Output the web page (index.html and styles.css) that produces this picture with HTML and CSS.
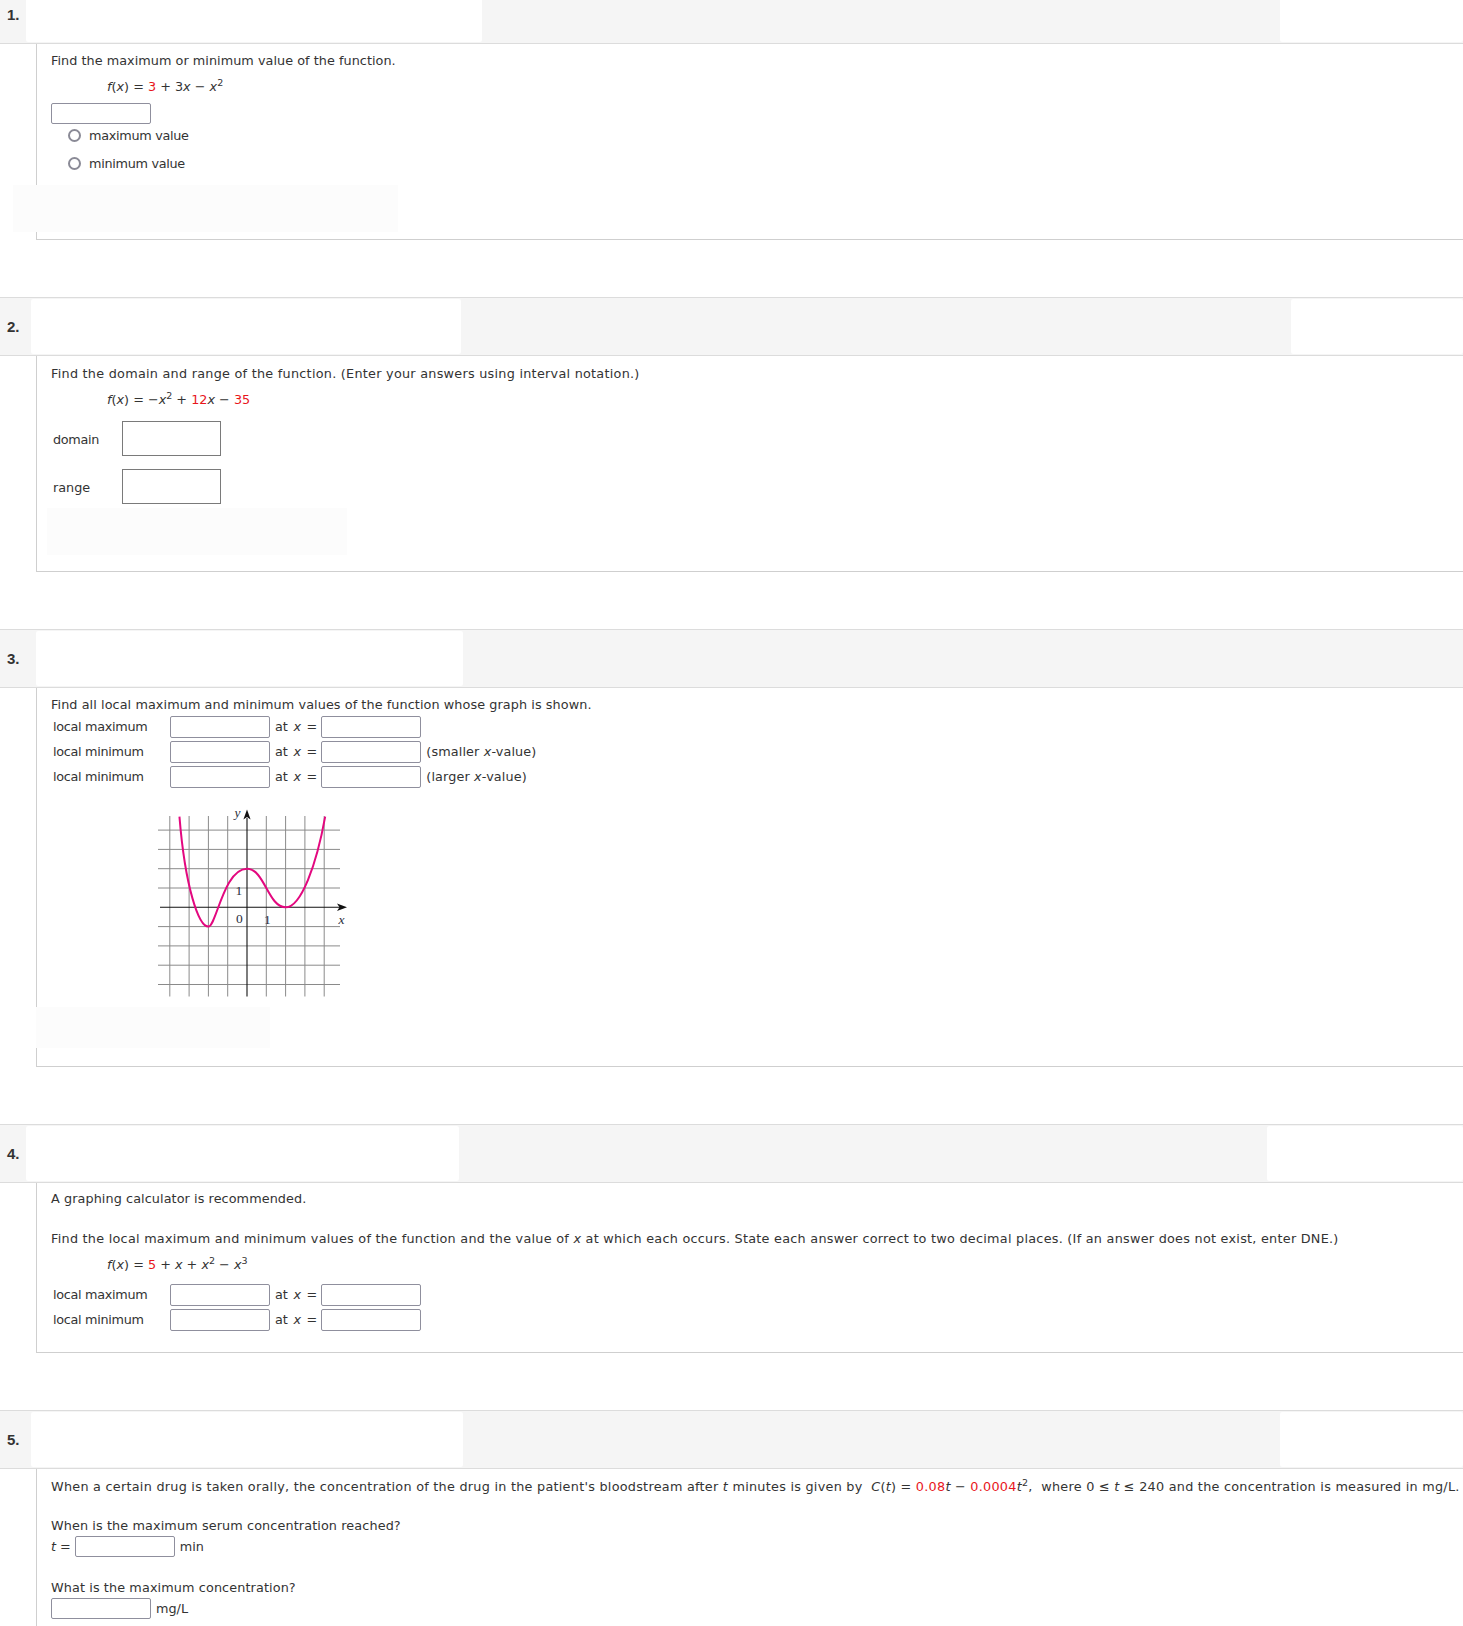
FILE: index.html
```html
<!DOCTYPE html>
<html lang="en">
<head>
<meta charset="utf-8">
<title>Assignment</title>
<link rel="stylesheet" href="styles.css">
</head>
<body>

<section class="q q1">
  <div class="qhead">
    <span class="qnum">1.</span>
    <div class="redact rl1"></div>
    <div class="redact rr rr1"></div>
  </div>
  <div class="qbody b1">
    <p class="p ls04">Find the maximum or minimum value of the function.</p>
    <p class="p fx"><i>f</i>(<i>x</i>) = <span class="r">3</span> + 3<i>x</i> − <i>x</i><sup>2</sup></p>
    <div class="ansline"><span class="inp"></span></div>
    <div class="radio first"><span class="rc"></span><span class="tight">maximum value</span></div>
    <div class="radio"><span class="rc"></span><span class="tight">minimum value</span></div>
    <div class="tools t1"></div>
  </div>
</section>

<section class="q">
  <div class="qhead">
    <span class="qnum">2.</span>
    <div class="redact rl2"></div>
    <div class="redact rr rr2"></div>
  </div>
  <div class="qbody b2">
    <p class="p wide">Find the domain and range of the function. (Enter your answers using interval notation.)</p>
    <p class="p fx"><i>f</i>(<i>x</i>) = −<i>x</i><sup>2</sup> + <span class="r">12</span><i>x</i> − <span class="r">35</span></p>
    <div class="drow d1"><span class="dlbl tight">domain</span><span class="inp big"></span></div>
    <div class="drow d2"><span class="dlbl">range</span><span class="inp big"></span></div>
    <div class="tools t2"></div>
  </div>
</section>

<section class="q">
  <div class="qhead">
    <span class="qnum">3.</span>
    <div class="redact rl3"></div>
  </div>
  <div class="qbody b3">
    <p class="p ls08">Find all local maximum and minimum values of the function whose graph is shown.</p>
    <div class="rows r3">
      <div class="row"><span class="lbl">local maximum</span><span class="inp"></span><span class="at">at <i>x</i> =</span><span class="inp"></span></div>
      <div class="row"><span class="lbl">local minimum</span><span class="inp"></span><span class="at">at <i>x</i> =</span><span class="inp"></span><span class="note">(smaller <i>x</i>-value)</span></div>
      <div class="row"><span class="lbl">local minimum</span><span class="inp"></span><span class="at">at <i>x</i> =</span><span class="inp"></span><span class="note">(larger <i>x</i>-value)</span></div>
    </div>
    <svg class="graph" width="200" height="195" viewBox="0 0 200 195" xmlns="http://www.w3.org/2000/svg">
      <g stroke="#8a8a8a" stroke-width="1" fill="none">
        <path d="M19.8 10V190.5M39.1 10V190.5M58.4 10V190.5M77.7 10V190.5M116.3 10V190.5M135.6 10V190.5M154.9 10V190.5M174.2 10V190.5"/>
        <path d="M8 24.1H190M8 43.4H190M8 62.7H190M8 82H190M8 120.6H190M8 139.9H190M8 159.2H190M8 178.5H190"/>
      </g>
      <g stroke="#111" stroke-width="1.1" fill="none">
        <path d="M10 101.3H190"/>
        <path d="M97 190.5V12"/>
      </g>
      <path d="M197 101.3L187 97.6L189.5 101.3L187 105Z" fill="#111"/>
      <path d="M97 3.5L93.4 13.5L97 11L100.6 13.5Z" fill="#111"/>
      <path d="M29.45 10.59 C35.24 82 48.75 120.6 58.4 120.6 C66.12 120.6 73.84 62.7 97 62.7 C114.37 62.7 118.23 101.3 135.6 101.3 C151.04 101.3 166.48 58.84 175.17 10.59" stroke="#e3087f" stroke-width="2" fill="none"/>
      <g class="glbl" fill="#2b3040">
        <text x="84.5" y="11" font-style="italic">y</text>
        <text x="188.5" y="117.5" font-style="italic">x</text>
        <text x="86" y="116.7">0</text>
        <text x="114" y="117.5">1</text>
        <text x="85.5" y="89">1</text>
      </g>
    </svg>
    <div class="tools t3"></div>
  </div>
</section>

<section class="q">
  <div class="qhead">
    <span class="qnum">4.</span>
    <div class="redact rl4"></div>
    <div class="redact rr rr4"></div>
  </div>
  <div class="qbody b4">
    <p class="p ls08">A graphing calculator is recommended.</p>
    <p class="p gap wide">Find the local maximum and minimum values of the function and the value of <i>x</i> at which each occurs. State each answer correct to two decimal places. (If an answer does not exist, enter DNE.)</p>
    <p class="p fx"><i>f</i>(<i>x</i>) = <span class="r">5</span> + <i>x</i> + <i>x</i><sup>2</sup> − <i>x</i><sup>3</sup></p>
    <div class="rows r4">
      <div class="row"><span class="lbl">local maximum</span><span class="inp"></span><span class="at">at <i>x</i> =</span><span class="inp"></span></div>
      <div class="row"><span class="lbl">local minimum</span><span class="inp"></span><span class="at">at <i>x</i> =</span><span class="inp"></span></div>
    </div>
  </div>
</section>

<section class="q">
  <div class="qhead">
    <span class="qnum">5.</span>
    <div class="redact rl5"></div>
    <div class="redact rr rr5"></div>
  </div>
  <div class="qbody b5">
    <p class="p wide">When a certain drug is taken orally, the concentration of the drug in the patient's bloodstream after <i>t</i> minutes is given by &nbsp;<i>C</i>(<i>t</i>) = <span class="r">0.08</span><i>t</i> − <span class="r">0.0004</span><i>t</i><sup>2</sup>, &nbsp;where 0 ≤ <i>t</i> ≤ 240 and the concentration is measured in mg/L.</p>
    <p class="p gap2 ls11">When is the maximum serum concentration reached?</p>
    <div class="ansline a5a"><span class="pre"><i>t</i> =</span><span class="inp"></span><span class="unit">min</span></div>
    <p class="p gap3 ls11">What is the maximum concentration?</p>
    <div class="ansline a5b"><span class="inp"></span><span class="unit">mg/L</span></div>
  </div>
</section>

</body>
</html>
```

FILE: styles.css
```css
html {
  overflow: hidden;
}

body {
  margin: 0;
  background: #ffffff;
  color: #333333;
  font-family: "DejaVu Sans", Verdana, sans-serif;
  font-size: 12.8px;
}

.q {
  margin-bottom: 57px;
}

.q1 {
  margin-top: -15px;
}

/* header band */
.qhead {
  display: flex;
  align-items: stretch;
  height: 57px;
  background: #f5f5f5;
  border-top: 1px solid #dcdcdc;
  border-bottom: 1px solid #dcdcdc;
}

.qnum {
  display: flex;
  align-items: center;
  width: 19px;
  padding-left: 7px;
  font-family: "Liberation Sans", Arial, sans-serif;
  font-weight: bold;
  font-size: 15px;
  color: #333333;
}

.redact {
  margin: 1px 0;
  background: #ffffff;
  opacity: 0.92;
  border-radius: 2px;
}

.rl1 { width: 456px; }
.rl2 { width: 430px; margin-left: 5px; }
.rl3 { width: 427px; margin-left: 10px; }
.rl4 { width: 433px; }
.rl5 { width: 432px; margin-left: 5px; }

.rr { margin-left: auto; }
.rr1 { width: 183px; }
.rr2 { width: 172px; }
.rr4 { width: 196px; }
.rr5 { width: 183px; }

/* body box */
.qbody {
  margin-left: 36px;
  border-left: 1px solid #cfcfcf;
  border-bottom: 1px solid #cfcfcf;
  padding: 8px 14px 0 14px;
}

.p {
  margin: 0;
  line-height: 16px;
  white-space: nowrap;
}

.wide { letter-spacing: 0.26px; }
.ls04 { letter-spacing: 0.04px; }
.ls08 { letter-spacing: 0.08px; }
.ls11 { letter-spacing: 0.11px; }
.tight { letter-spacing: -0.3px; }

.fx {
  margin-top: 10px;
  padding-left: 56px;
}

sup {
  font-size: 9.5px;
  line-height: 0;
  vertical-align: 5px;
}

.r {
  color: #e8161b;
}

.inp {
  display: inline-block;
  box-sizing: border-box;
  width: 100px;
  height: 21px;
  background: #ffffff;
  border: 1px solid #8f8f9d;
  border-radius: 2px;
  flex: none;
}

.inp.big {
  width: 99px;
  height: 35px;
  border-color: #7a7a7a;
  border-radius: 0;
}

.ansline {
  display: flex;
  align-items: center;
  height: 21px;
}

/* question 1 */
.b1 {
  padding-top: 9px;
  padding-bottom: 7px;
}

.b1 .ansline {
  margin-top: 8px;
}

.radio {
  display: flex;
  align-items: center;
  height: 16px;
  margin-top: 12px;
  padding-left: 17px;
}

.radio.first {
  margin-top: 3px;
}

.rc {
  box-sizing: border-box;
  width: 13px;
  height: 13px;
  margin-right: 8px;
  border: 2px solid #8a8a96;
  border-radius: 50%;
  background: #ffffff;
}

.tools {
  height: 47px;
  background: #fcfcfc;
}

.t1 {
  width: 385px;
  margin: 14px 0 0 -38px;
}

/* question 2 */
.b2 {
  padding-top: 10px;
  padding-bottom: 16px;
}

.drow {
  display: flex;
  align-items: center;
  height: 35px;
}

.d1 { margin-top: 13px; }
.d2 { margin-top: 13px; }

.dlbl {
  width: 69px;
  padding-left: 2px;
  padding-top: 2px;
}

.t2 {
  width: 300px;
  margin: 4px 0 0 -4px;
}

/* rows (questions 3 and 4) */
.row {
  display: flex;
  align-items: center;
  height: 25px;
}

.row .inp {
  height: 22px;
}

.lbl {
  box-sizing: border-box;
  width: 119px;
  padding-left: 2px;
  letter-spacing: -0.3px;
}

.at {
  margin: 0 4px 0 5px;
  word-spacing: 1.5px;
}

.note {
  margin-left: 5px;
  letter-spacing: 0.12px;
}

/* question 3 */
.b3 {
  padding-top: 9px;
  padding-bottom: 18px;
}

.r3 {
  margin-top: 1px;
}

.graph {
  display: block;
  margin: 17px 0 0 99px;
}

.glbl {
  font-family: "Liberation Serif", "Times New Roman", serif;
  font-size: 13.5px;
}

.t3 {
  width: 234px;
  height: 41px;
  margin: 6px 0 0 -15px;
}

/* question 4 */
.b4 {
  padding-top: 8px;
  padding-bottom: 20px;
}

.gap {
  margin-top: 24px;
}

.r4 {
  margin-top: 9px;
}

/* question 5 */
.b5 {
  padding-top: 10px;
  padding-bottom: 40px;
}

.gap2 {
  margin-top: 23px;
}

.gap3 {
  margin-top: 23px;
}

.a5a {
  margin-top: 2px;
}

.a5b {
  margin-top: 2px;
}

.pre {
  margin-right: 4px;
}

.unit {
  margin-left: 5px;
}
```
